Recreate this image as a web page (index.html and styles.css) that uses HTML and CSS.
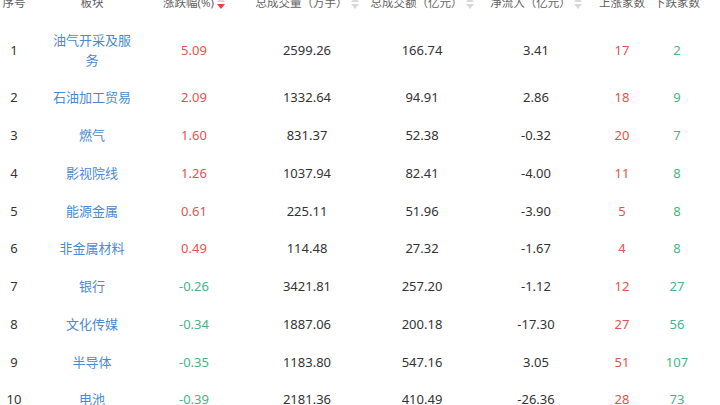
FILE: index.html
```html
<!DOCTYPE html>
<html lang="zh">
<head>
<meta charset="utf-8">
<title>板块资金流向</title>
<link rel="stylesheet" href="styles.css">
</head>
<body>
<div class="table">
  <div class="row head">
    <div class="c">序号</div>
    <div class="c name">板块</div>
    <div class="c">涨跌幅(%)<svg class="sort" viewBox="0 0 8 12" width="8" height="12"><path d="M0 5 L4 0 L8 5 Z" fill="#d9d9d9"/><path d="M0 7 L8 7 L4 12 Z" fill="#e8413b"/></svg></div>
    <div class="c">总成交量（万手）<svg class="sort" viewBox="0 0 8 12" width="8" height="12"><path d="M0 5 L4 0 L8 5 Z" fill="#d9d9d9"/><path d="M0 7 L8 7 L4 12 Z" fill="#d9d9d9"/></svg></div>
    <div class="c">总成交额（亿元）<svg class="sort" viewBox="0 0 8 12" width="8" height="12"><path d="M0 5 L4 0 L8 5 Z" fill="#d9d9d9"/><path d="M0 7 L8 7 L4 12 Z" fill="#d9d9d9"/></svg></div>
    <div class="c">净流入（亿元）<svg class="sort" viewBox="0 0 8 12" width="8" height="12"><path d="M0 5 L4 0 L8 5 Z" fill="#d9d9d9"/><path d="M0 7 L8 7 L4 12 Z" fill="#d9d9d9"/></svg></div>
    <div class="c">上涨家数</div>
    <div class="c">下跌家数</div>
  </div>
  <div class="row"><div class="c">1</div><div class="c name link">油气开采及服务</div><div class="c up">5.09</div><div class="c">2599.26</div><div class="c">166.74</div><div class="c">3.41</div><div class="c up">17</div><div class="c down">2</div></div>
  <div class="row"><div class="c">2</div><div class="c name link">石油加工贸易</div><div class="c up">2.09</div><div class="c">1332.64</div><div class="c">94.91</div><div class="c">2.86</div><div class="c up">18</div><div class="c down">9</div></div>
  <div class="row"><div class="c">3</div><div class="c name link">燃气</div><div class="c up">1.60</div><div class="c">831.37</div><div class="c">52.38</div><div class="c">-0.32</div><div class="c up">20</div><div class="c down">7</div></div>
  <div class="row"><div class="c">4</div><div class="c name link">影视院线</div><div class="c up">1.26</div><div class="c">1037.94</div><div class="c">82.41</div><div class="c">-4.00</div><div class="c up">11</div><div class="c down">8</div></div>
  <div class="row"><div class="c">5</div><div class="c name link">能源金属</div><div class="c up">0.61</div><div class="c">225.11</div><div class="c">51.96</div><div class="c">-3.90</div><div class="c up">5</div><div class="c down">8</div></div>
  <div class="row"><div class="c">6</div><div class="c name link">非金属材料</div><div class="c up">0.49</div><div class="c">114.48</div><div class="c">27.32</div><div class="c">-1.67</div><div class="c up">4</div><div class="c down">8</div></div>
  <div class="row"><div class="c">7</div><div class="c name link">银行</div><div class="c down">-0.26</div><div class="c">3421.81</div><div class="c">257.20</div><div class="c">-1.12</div><div class="c up">12</div><div class="c down">27</div></div>
  <div class="row"><div class="c">8</div><div class="c name link">文化传媒</div><div class="c down">-0.34</div><div class="c">1887.06</div><div class="c">200.18</div><div class="c">-17.30</div><div class="c up">27</div><div class="c down">56</div></div>
  <div class="row"><div class="c">9</div><div class="c name link">半导体</div><div class="c down">-0.35</div><div class="c">1183.80</div><div class="c">547.16</div><div class="c">3.05</div><div class="c up">51</div><div class="c down">107</div></div>
  <div class="row"><div class="c">10</div><div class="c name link">电池</div><div class="c down">-0.39</div><div class="c">2181.36</div><div class="c">410.49</div><div class="c">-26.36</div><div class="c up">28</div><div class="c down">73</div></div>
</div>
</body>
</html>
```
FILE: styles.css
```css
html, body {
  margin: 0;
  padding: 0;
  background: #ffffff;
  overflow: hidden;
}
body {
  font-family: "Noto Sans", "Noto Sans CJK SC", sans-serif;
  font-size: 13px;
  color: #333333;
}
.table {
  margin-top: -16px;
  width: 720px;
}
.row {
  display: grid;
  grid-template-columns: 28px 128px 76px 150px 80px 148px 24px 86px;
}
.c {
  display: flex;
  justify-content: center;
  align-items: center;
  text-align: center;
  white-space: nowrap;
  padding: 9px 0;
  line-height: 19.75px;
}
.c.name {
  white-space: normal;
  padding-left: 20px;
  padding-right: 20px;
}
.head .c {
  color: #5f5f5f;
  font-size: 11.5px;
}
.link {
  color: #4a8ad4;
}
.up {
  color: #e6534a;
}
.down {
  color: #45b583;
}
.sort {
  margin-left: 3px;
  flex: none;
}
```
